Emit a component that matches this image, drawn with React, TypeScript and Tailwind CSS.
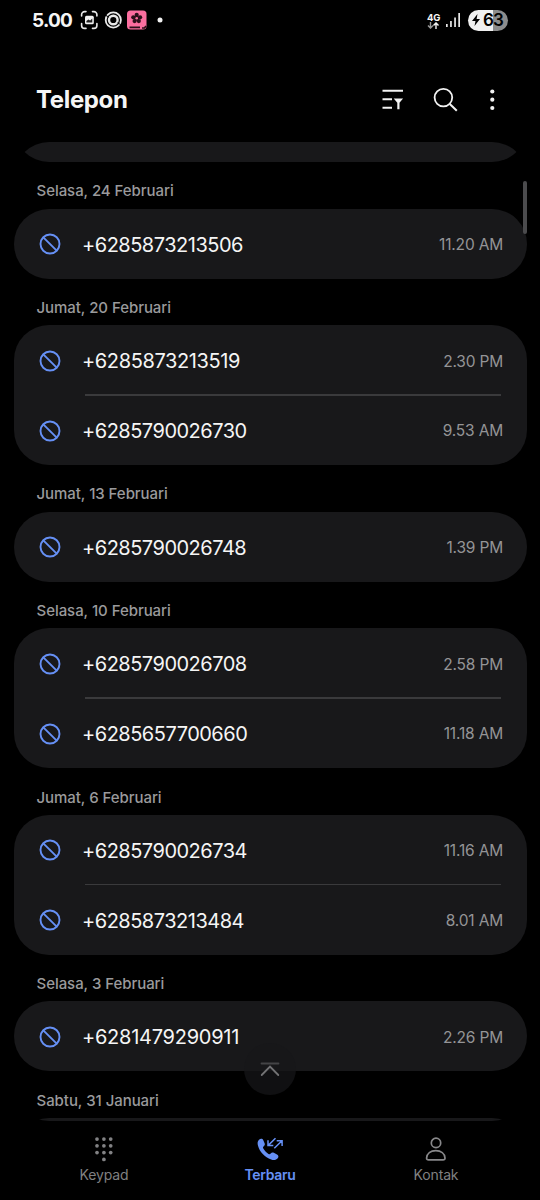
type Call = { number: string; time: string; tracking?: string };
type Group = { date: string; calls: Call[] };

const groups: Group[] = [
  { date: 'Selasa, 24 Februari', calls: [{ number: '+6285873213506', time: '11.20 AM' }] },
  {
    date: 'Jumat, 20 Februari',
    calls: [
      { number: '+6285873213519', time: '2.30 PM', tracking: 'tracking-[-0.38px]' },
      { number: '+6285790026730', time: '9.53 AM' },
    ],
  },
  { date: 'Jumat, 13 Februari', calls: [{ number: '+6285790026748', time: '1.39 PM' }] },
  {
    date: 'Selasa, 10 Februari',
    calls: [
      { number: '+6285790026708', time: '2.58 PM' },
      { number: '+6285657700660', time: '11.18 AM' },
    ],
  },
  {
    date: 'Jumat, 6 Februari',
    calls: [
      { number: '+6285790026734', time: '11.16 AM' },
      { number: '+6285873213484', time: '8.01 AM' },
    ],
  },
  {
    date: 'Selasa, 3 Februari',
    calls: [{ number: '+6281479290911', time: '2.26 PM', tracking: 'tracking-[-0.26px]' }],
  },
  { date: 'Sabtu, 31 Januari', calls: [{ number: '', time: '' }] },
];

function StatusBar() {
  return (
    <div className="flex h-10 shrink-0 items-center pl-8 pr-[32px]">
      <span className="w-[48px] pt-px text-[19px] font-bold leading-none tracking-[-0.8px]">5.00</span>
      <svg className="h-5 w-[84px]" viewBox="0 0 84 20" fill="none">
        <g stroke="#e8e8e8" strokeWidth="1.6" strokeLinecap="round">
          <path d="M1.6 6V4.6a3 3 0 0 1 3-3H6M12.5 1.6h1.4a3 3 0 0 1 3 3V6M16.9 13.5v1.9a3 3 0 0 1-3 3h-1.4M6 18.4H4.6a3 3 0 0 1-3-3v-1.9" />
        </g>
        <rect x="5" y="5.7" width="8.8" height="8.6" rx="1.5" fill="#f2f2f2" />
        <path d="M6.4 12.4V11l2-1.600 1.700 1 2.200-1.900v3.900z" fill="#222" />
        <circle cx="33.3" cy="10" r="7.6" stroke="#e8e8e8" strokeWidth="1.8" />
        <circle cx="33.3" cy="10" r="4.3" stroke="#e8e8e8" strokeWidth="2.4" />
        <path d="M26 5.500l3 1.700M37.500 12.800l3 1.700" stroke="#000" strokeWidth="1" />
        <rect x="47" y="0.5" width="19.5" height="19" rx="3.5" fill="#fb6e9f" />
        <g fill="#2b1019">
          <circle cx="56.7" cy="4.9" r="2.1" />
          <circle cx="60.1" cy="7.3" r="2.1" />
          <circle cx="58.8" cy="11.1" r="2.1" />
          <circle cx="54.6" cy="11.1" r="2.1" />
          <circle cx="53.3" cy="7.3" r="2.1" />
          <circle cx="56.7" cy="8.3" r="2.5" />
        </g>
        <circle cx="56.7" cy="8.3" r="1.3" fill="#fb6e9f" />
        <path d="M49.5 17.3h10.5M62 18h2.5l1.5-2" stroke="#2b1019" strokeWidth="1.7" />
        <circle cx="80" cy="10" r="2.5" fill="#f2f2f2" />
      </svg>
      <div className="ml-auto flex items-center">
        <div className="flex w-[15px] flex-col items-center pt-px">
          <span className="text-[9.5px] font-bold leading-[9px] tracking-[-0.2px]">4G</span>
          <svg className="h-[7px] w-[13px]" viewBox="0 0 13 7" fill="none" strokeWidth="1.4">
            <path d="M3.5 0v6M1 3.6l2.500 2.500L6 3.600" stroke="#999" />
            <path d="M9 7V1M6.500 3.400L9 .9l2.500 2.500" stroke="#f2f2f2" />
          </svg>
        </div>
        <svg className="ml-[5px] h-4 w-[15px]" viewBox="0 0 15 16" fill="#e8e8e8">
          <rect x="0" y="12" width="1.7" height="3" />
          <rect x="4.1" y="9" width="1.7" height="6" />
          <rect x="8.2" y="5.5" width="1.7" height="9.5" />
          <rect x="12.3" y="1" width="1.7" height="14" />
        </svg>
        <div className="ml-[7px] flex h-[21px] w-10 items-center rounded-full bg-[linear-gradient(90deg,#f0f0f0_63%,#8c8c8c_63%)] pl-1 text-black">
          <svg className="h-3 w-2" viewBox="0 0 8 12" fill="#000">
            <path d="M5.500 0L0 7h3.500L2.500 12 8 5H4.600z" />
          </svg>
          <span className="ml-[3px] text-[17px] font-semibold leading-none tracking-[-0.8px]">63</span>
        </div>
      </div>
    </div>
  );
}

function Header() {
  return (
    <header className="flex h-[101.7px] shrink-0 items-start pl-[36px] pr-[38px] pt-10">
      <h1 className="flex h-10 items-center text-[24px] font-bold tracking-[-0.35px]">Telepon</h1>
      <svg className="ml-auto h-10 w-[120px]" viewBox="0 0 120 40" fill="none" stroke="#f2f2f2">
        <path d="M0.5 10.7h20.5M0.5 19.3h9.5M0.5 27.7h9.5" strokeWidth="1.9" />
        <path d="M11.7 18.500h9.400l-3.600 4.300v6.500h-2.200v-6.500z" fill="#f2f2f2" stroke="none" />
        <circle cx="61.4" cy="17.6" r="8.8" strokeWidth="1.8" />
        <path d="M67.800 24l7 6.800" strokeWidth="2" />
        <g fill="#f2f2f2" stroke="none">
          <circle cx="110.3" cy="11.5" r="2.1" />
          <circle cx="110.3" cy="19.7" r="2.1" />
          <circle cx="110.3" cy="28" r="2.1" />
        </g>
      </svg>
    </header>
  );
}

function CallRow({ call, divided }: { call: Call; divided: boolean }) {
  return (
    <div className="relative flex h-[69.9px] items-center pl-[25px] pr-[23.5px] pt-px">
      {divided && <div className="absolute left-[71.5px] right-[25.5px] top-[-1px] h-[1.5px] bg-[#3a3a3c]" />}
      <svg className="size-[22px]" viewBox="0 0 22 22" fill="none" stroke="#6690f5" strokeWidth="1.9">
        <circle cx="11" cy="11" r="9.5" />
        <path d="M4.300 4.300l13.400 13.400" />
      </svg>
      <span className={`ml-[21.5px] pt-px text-[20px] leading-none text-[#f5f5f5] ${call.tracking ?? 'tracking-[-0.5px]'}`}>
        {call.number}
      </span>
      <span className="ml-auto pt-px text-[15.5px] leading-none tracking-[-0.18px] text-[#949496]">{call.time}</span>
    </div>
  );
}

export default function App() {
  return (
    <div className="flex h-[1200px] w-[540px] flex-col overflow-hidden bg-black font-['Inter',sans-serif] text-[#f5f5f5]">
      <StatusBar />
      <Header />
      <main className="relative h-[979.3px] shrink-0">
        <div className="mx-[13.5px] h-full overflow-hidden rounded-[35px]">
          <div className="-mt-[49.5px] h-[69.9px] rounded-[35px] bg-[#18181a]" />
          {groups.map((g) => (
            <section key={g.date}>
              <h2 className="flex h-[46.7px] items-center pl-[23px] pt-[11px] text-[15px] font-medium leading-none tracking-[-0.05px] text-[#9a9a9c]">
                {g.date}
              </h2>
              <div className="rounded-[35px] bg-[#18181a]">
                {g.calls.map((c, i) =>
                  c.number ? <CallRow key={c.number} call={c} divided={i > 0} /> : <div key="empty" className="h-[69.9px]" />,
                )}
              </div>
            </section>
          ))}
        </div>
        <div className="absolute right-[13px] top-[39px] h-[53px] w-1 rounded-full bg-[#4b4b4d]" />
        <button
          aria-label="Ke atas"
          className="absolute left-[244px] top-[901.3px] flex size-[52px] items-center justify-center rounded-full bg-[#171719]/70"
        >
          <svg className="h-4 w-5" viewBox="0 0 20 16" fill="none" strokeWidth="1.8" strokeLinecap="round">
            <path d="M1.500 2.500h17" stroke="#444446" />
            <path d="M1.700 14L10 5.500l8.300 8.500" stroke="#727274" />
          </svg>
        </button>
      </main>
      <nav className="flex flex-1 px-[21px] pt-[14px] text-[14px] leading-none tracking-[-0.15px] text-[#808082]">
        <div className="flex w-[166px] flex-col items-center">
          <svg className="h-7 w-6" viewBox="0 0 24 28" fill="#828284">
            {[4.1, 10.8, 17.6].flatMap((y) => [5, 11.9, 18.7].map((x) => <circle key={`${x}-${y}`} cx={x} cy={y} r="1.85" />))}
            <circle cx="11.9" cy="24.4" r="1.85" />
          </svg>
          <span className="mt-[5.5px]">Keypad</span>
        </div>
        <div className="flex w-[166px] flex-col items-center text-[#6690f5]">
          <svg className="h-7 w-[26px]" viewBox="0 0 26 28" fill="none">
            <path
              d="M2 4.700C3.500 3.300 5.500 3.500 6.300 5.200l1.300 3c.5 1.200.2 2.200-.8 3-.9.700-1 1.300-.5 2.300 1.300 2.300 2.900 4 5.200 5.400.9.500 1.500.4 2.200-.4.900-1.100 1.900-1.300 3.100-.7l3.200 1.600c1.600.8 1.900 2.400.7 3.800-1.500 1.800-3.800 2.200-6.500 1.200C7.700 22.300 2.700 17 1 10.800.3 8.300.5 6 2 4.700z"
              fill="#6690f5"
            />
            <path d="M18.500 3.200l-7.500 7.400M11 5.300v5.300h5.300M17.300 13.300l7.700-7.500M19.700 5.700h5.400v5.300" stroke="#6690f5" strokeWidth="1.500" />
          </svg>
          <span className="mt-[5.5px] font-semibold tracking-[-0.3px]">Terbaru</span>
        </div>
        <div className="flex w-[166px] flex-col items-center">
          <svg className="h-7 w-6" viewBox="0 0 24 28" fill="none" stroke="#88888a" strokeWidth="1.7">
            <circle cx="12" cy="7.9" r="4.7" />
            <path d="M4.500 24.900c-1.200 0-2-.7-1.900-1.900.3-4.500 4-7.300 9.200-7.300s8.900 2.800 9.200 7.300c.1 1.200-.7 1.900-1.900 1.900z" />
          </svg>
          <span className="mt-[5.5px]">Kontak</span>
        </div>
      </nav>
    </div>
  );
}
